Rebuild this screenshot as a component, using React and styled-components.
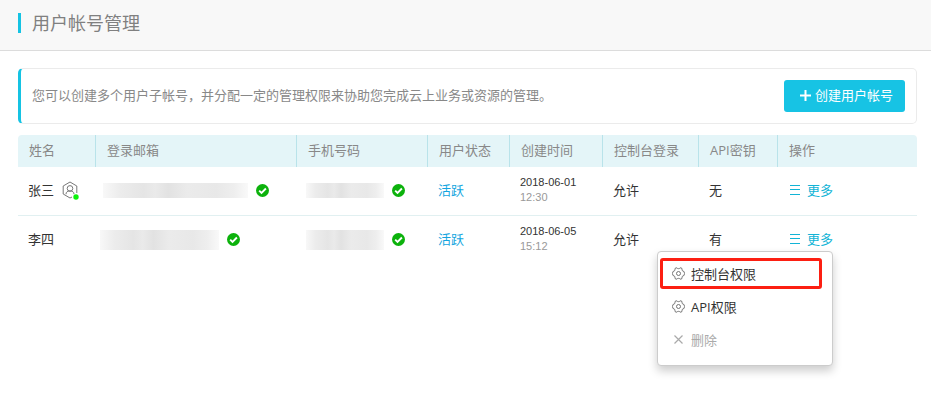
import React, { useState } from "react";
import styled, { createGlobalStyle } from "styled-components";

const columns = [
    { title: "姓名", width: 78 },
    { title: "登录邮箱", width: 201 },
    { title: "手机号码", width: 131 },
    { title: "用户状态", width: 82 },
    { title: "创建时间", width: 93 },
    { title: "控制台登录", width: 96 },
    { title: "API密钥", width: 79 },
    { title: "操作" },
];

const users = [
    {
        id: 1,
        name: "张三",
        owner: true,
        mail: { width: 145, height: 15, indent: 7 },
        phone: { width: 78, height: 15, indent: 9 },
        status: "活跃",
        date: "2018-06-01",
        time: "12:30",
        login: "允许",
        apiKey: "无",
    },
    {
        id: 2,
        name: "李四",
        mail: { width: 119, height: 20, indent: 4 },
        phone: { width: 78, height: 20, indent: 9 },
        status: "活跃",
        date: "2018-06-05",
        time: "15:12",
        login: "允许",
        apiKey: "有",
    },
];

const PlusIcon = () => (
    <svg width="11" height="11" viewBox="0 0 11 11" aria-hidden="true">
        <path d="M5.5 0v11M0 5.5h11" stroke="#fff" strokeWidth="2" />
    </svg>
);

const CheckIcon = () => (
    <svg width="13" height="13" viewBox="0 0 13 13" aria-hidden="true">
        <circle cx="6.5" cy="6.5" r="6.5" fill="#0cb20c" />
        <path
            d="M3.2 6.6l2.3 2.3 4.4-4.4"
            fill="none"
            stroke="#fff"
            strokeWidth="1.9"
        />
    </svg>
);

const OwnerIcon = () => (
    <svg width="17" height="19" viewBox="0 0 17 19" aria-hidden="true">
        <g fill="none" stroke="#777" strokeWidth="1">
            <path d="M10 16l-2 1-6.8-4V5L8 1l6.8 4v7" />
            <circle cx="8" cy="7.4" r="2.8" />
            <path d="M4 13.2c0-2.3 1.5-3.2 4-3.2s4 .9 4 3.2" />
        </g>
        <circle cx="14" cy="16" r="2.7" fill="#0df20d" />
    </svg>
);

const ListIcon = () => (
    <svg width="12" height="12" viewBox="0 0 12 12" aria-hidden="true">
        <path d="M2 1.5h10M2 5.5h10M2 10.5h10" stroke="#12b4d6" strokeWidth="1" />
    </svg>
);

const GearIcon = () => (
    <svg width="13" height="13" viewBox="0 0 13 13" aria-hidden="true">
        <g fill="none" stroke="#666" strokeWidth="0.9" strokeLinejoin="round">
            <path d="M3.6.9h1.3c.5 1 2.7 1 3.2 0h1.3l.7 1.2c-.5 1 .5 2.3 1.8 2.3l.7 2.1-.7 2.1c-1.3 0-2.3 1.3-1.8 2.3l-.7 1.2H8.1c-.5-1-2.7-1-3.2 0H3.6l-.7-1.2c.5-1-.5-2.3-1.8-2.3L.4 6.5l.7-2.1c1.3 0 2.3-1.3 1.8-2.3z" />
            <circle cx="6.5" cy="6.5" r="2" />
        </g>
    </svg>
);

const CrossIcon = () => (
    <svg width="13" height="13" viewBox="0 0 13 13" aria-hidden="true">
        <path d="M2.5 2.5l8 8M10.5 2.5l-8 8" stroke="#aaa" strokeWidth="1.2" />
    </svg>
);

const App = () => {
    const [openId, setOpenId] = useState(2);

    const toggle = (id) => setOpenId(openId === id ? null : id);

    return (
        <Page>
            <GlobalStyle />
            <Header>
                <Title>用户帐号管理</Title>
            </Header>
            <Main>
                <Notice>
                    <p>
                        您可以创建多个用户子帐号，并分配一定的管理权限来协助您完成云上业务或资源的管理。
                    </p>
                    <CreateButton type="button">
                        <PlusIcon />
                        创建用户帐号
                    </CreateButton>
                </Notice>
                <Table>
                    <colgroup>
                        {columns.map((c) => (
                            <Col key={c.title} $width={c.width} />
                        ))}
                    </colgroup>
                    <thead>
                        <tr>
                            {columns.map((c) => (
                                <Th key={c.title}>{c.title}</Th>
                            ))}
                        </tr>
                    </thead>
                    <tbody>
                        {users.map((u) => (
                            <Row key={u.id}>
                                <Td>
                                    <Name>
                                        {u.name}
                                        {u.owner && <OwnerIcon />}
                                    </Name>
                                </Td>
                                <MaskTd>
                                    <Verified>
                                        <Mask {...maskProps(u.mail)} />
                                        <CheckIcon />
                                    </Verified>
                                </MaskTd>
                                <MaskTd>
                                    <Verified>
                                        <Mask {...maskProps(u.phone)} />
                                        <CheckIcon />
                                    </Verified>
                                </MaskTd>
                                <Td>
                                    <Status>{u.status}</Status>
                                </Td>
                                <Td>
                                    <Created>
                                        {u.date}
                                        <span>{u.time}</span>
                                    </Created>
                                </Td>
                                <Td>{u.login}</Td>
                                <Td>{u.apiKey}</Td>
                                <Td>
                                    <Actions>
                                        <MoreButton
                                            type="button"
                                            aria-expanded={openId === u.id}
                                            onClick={() => toggle(u.id)}
                                        >
                                            <ListIcon />
                                            更多
                                        </MoreButton>
                                        {openId === u.id && (
                                            <Menu>
                                                <MenuItem type="button" $marked>
                                                    <GearIcon />
                                                    控制台权限
                                                </MenuItem>
                                                <MenuItem type="button">
                                                    <GearIcon />
                                                    API权限
                                                </MenuItem>
                                                <MenuItem type="button" disabled>
                                                    <CrossIcon />
                                                    删除
                                                </MenuItem>
                                            </Menu>
                                        )}
                                    </Actions>
                                </Td>
                            </Row>
                        ))}
                    </tbody>
                </Table>
            </Main>
        </Page>
    );
};

const maskProps = (m) => ({
    $width: m.width,
    $height: m.height,
    $indent: m.indent,
});

const GlobalStyle = createGlobalStyle`
    * {
        box-sizing: border-box;
    }
    body {
        margin: 0;
        background: #fff;
        color: #333;
        font: 13px/20px "Open Sans", "Noto Sans CJK SC", sans-serif;
    }
    button {
        font: inherit;
        border: 0;
        padding: 0;
        background: none;
        cursor: pointer;
    }
    svg {
        flex: none;
    }
`;

const Page = styled.div`
    min-height: 100vh;
`;

const Header = styled.header`
    display: flex;
    align-items: flex-start;
    height: 51px;
    padding: 13px 18px 0;
    background: #f8f8f8;
    border-bottom: 1px solid #dcdcdc;
`;

const Title = styled.h1`
    margin: 0;
    padding-left: 11px;
    border-left: 3px solid #15c3e3;
    color: #808080;
    font-size: 18px;
    font-weight: 400;
    line-height: 20px;
`;

const Main = styled.main`
    padding: 17px 14px 0 18px;
`;

const Notice = styled.section`
    display: flex;
    align-items: center;
    justify-content: space-between;
    min-height: 56px;
    margin-bottom: 11px;
    padding: 0 11px;
    border: 1px solid #ebebeb;
    border-left: 3px solid #15c3e3;
    border-radius: 5px;
    color: #888;

    p {
        margin: 0;
        padding-bottom: 2px;
    }
`;

const CreateButton = styled.button`
    display: flex;
    align-items: center;
    gap: 4px;
    height: 32px;
    && {
        padding: 0 12px 2px 16px;
        background: #17c3e4;
    }
    border-radius: 3px;
    color: #fff;
    white-space: nowrap;
`;

const Table = styled.table`
    width: 100%;
    table-layout: fixed;
    border-spacing: 0;
`;

const Col = styled.col`
    width: ${(p) => (p.$width ? `${p.$width}px` : "auto")};
`;

const Th = styled.th`
    height: 32px;
    padding: 0 0 2px 11px;
    background: #e4f5f8;
    border-right: 1px solid #b9e3ea;
    color: #888;
    font-weight: 400;
    text-align: left;
    white-space: nowrap;

    &:first-child {
        border-top-left-radius: 4px;
    }
    &:last-child {
        border-right: 0;
        border-top-right-radius: 4px;
    }
`;

const Td = styled.td`
    height: 49px;
    padding: 0 0 2px 10px;
    white-space: nowrap;
`;

const MaskTd = styled(Td)`
    padding: 0 0 1px;
`;

const Row = styled.tr`
    &:not(:last-child) td {
        border-bottom: 1px solid #e1f0f1;
    }
    &:last-child td {
        height: 48px;
    }
`;

const Name = styled.div`
    display: flex;
    align-items: center;
    gap: 8px;
`;

const Verified = styled.div`
    display: flex;
    align-items: center;
    gap: 8px;
`;

const Mask = styled.span`
    width: ${(p) => p.$width}px;
    height: ${(p) => p.$height}px;
    margin-left: ${(p) => p.$indent}px;
    background: linear-gradient(
        90deg,
        #f8f8f8,
        #ececec 12%,
        #e5e5e5 28%,
        #eaeaea 36%,
        #e2e2e2 45%,
        #ebebeb 58%,
        #e8e8e8 78%,
        #eeeeee 90%,
        #f9f9f9
    );
`;

const Status = styled.span`
    color: #12a5e0;
`;

const Created = styled.div`
    font: 11px/15px "Liberation Sans", sans-serif;

    span {
        display: block;
        color: #999;
    }
`;

const Actions = styled.div`
    position: relative;
    width: max-content;
`;

const MoreButton = styled.button`
    display: flex;
    align-items: center;
    gap: 7px;
    color: #12b4d6;
`;

const Menu = styled.div`
    position: absolute;
    top: 100%;
    right: 0;
    width: 176px;
    margin-top: 2px;
    padding: 5px 10px 9px 2px;
    background: #fff;
    border: 1px solid #ccc;
    border-radius: 4px;
    box-shadow: 0 5px 10px rgba(0, 0, 0, 0.2);
`;

const MenuItem = styled.button`
    && {
        display: flex;
        align-items: center;
        gap: 6px;
        width: 100%;
        height: ${(p) => (p.$marked ? 31 : 33)}px;
        margin: ${(p) => (p.$marked ? "1px 0" : "0")};
        padding: 0 9px;
        border: 3px solid ${(p) => (p.$marked ? "#fc1f12" : "transparent")};
        border-radius: 3px;
    }
    color: #333;

    &:disabled {
        color: #aaa;
        cursor: default;
    }
`;

export default App;
